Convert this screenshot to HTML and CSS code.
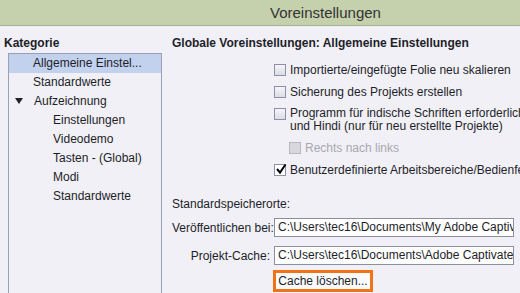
FILE: index.html
```html
<!DOCTYPE html>
<html lang="de">
<head>
    <meta charset="UTF-8">
    <title>Voreinstellungen</title>
    <link rel="stylesheet" href="styles.css">
</head>
<body>
    <div class="titlebar">Voreinstellungen</div>

    <div class="content">
        <div class="sidebar">
            <h3>Kategorie</h3>
            <div class="tree">
                <div class="item selected">Allgemeine Einstel...</div>
                <div class="item">Standardwerte</div>
                <div class="item"><span class="arrow"></span>Aufzeichnung</div>
                <div class="item sub">Einstellungen</div>
                <div class="item sub">Videodemo</div>
                <div class="item sub">Tasten - (Global)</div>
                <div class="item sub">Modi</div>
                <div class="item sub">Standardwerte</div>
            </div>
        </div>

        <div class="main">
            <h3>Globale Voreinstellungen: Allgemeine Einstellungen</h3>

            <div class="options">
                <label class="check"><span class="box"></span>Importierte/eingefügte Folie neu skalieren</label>
                <label class="check"><span class="box"></span>Sicherung des Projekts erstellen</label>
                <label class="check two-line"><span class="box"></span>Programm für indische Schriften erforderlich – Bengali, Gujarati<br>und Hindi (nur für neu erstellte Projekte)</label>
                <label class="check disabled"><span class="box"></span>Rechts nach links</label>
                <label class="check"><span class="box checked">
                    <svg width="12" height="12" viewBox="0 0 12 12"><path d="M2 6 L5 9.5 L10.5 1.5" fill="none" stroke="#000" stroke-width="2"/></svg>
                </span>Benutzerdefinierte Arbeitsbereiche/Bedienfelder</label>
            </div>

            <div class="section">Standardspeicherorte:</div>

            <div class="field">
                <span class="lbl">Veröffentlichen bei:</span>
                <div class="input">C:\Users\tec16\Documents\My Adobe Captivate Projects</div>
            </div>
            <div class="field">
                <span class="lbl right">Projekt-Cache:</span>
                <div class="input">C:\Users\tec16\Documents\Adobe Captivate Cached Projects</div>
            </div>
            <div class="field">
                <span class="lbl"></span>
                <div class="btn-wrap"><button class="btn">Cache löschen...</button></div>
            </div>
        </div>
    </div>
</body>
</html>
```

FILE: styles.css
```css
body {
    margin: 0;
    font-family: "Liberation Sans", Arial, sans-serif;
    font-size: 12px;
    color: #1e1e2a;
    background-color: #f0f0f6;
    overflow: hidden;
    height: 293px;
}

.titlebar {
    height: 25px;
    line-height: 25px;
    background-color: #c5d0ad;
    border-bottom: 1px solid #a4ad8d;
    color: #333;
    font-size: 15px;
    padding-left: 270px;
}

.content {
    display: flex;
    height: 267px;
    overflow: hidden;
}

h3 {
    margin: 0;
    font-size: 12px;
    font-weight: bold;
    height: 27px;
    line-height: 34px;
}

.sidebar {
    width: 162px;
    padding-left: 4px;
    flex-shrink: 0;
}

.tree {
    margin-left: 4px;
    width: 152px;
    height: 240px;
    border: 1px solid #9a9eb6;
    border-bottom: none;
}

.item {
    height: 19px;
    line-height: 19px;
    padding-left: 24px;
    white-space: nowrap;
}

.item.selected {
    background-color: #c1d1ee;
}

.item.sub {
    padding-left: 44px;
}

.arrow {
    display: inline-block;
    margin-left: -18px;
    margin-right: 11px;
    width: 0;
    height: 0;
    border-left: 4px solid transparent;
    border-right: 4px solid transparent;
    border-top: 6px solid #222;
    vertical-align: 1px;
}

.main {
    flex: 1;
    padding-left: 6px;
    min-width: 0;
    overflow: hidden;
}

.options {
    display: flex;
    flex-direction: column;
    padding-left: 102px;
    padding-top: 10px;
}

.check {
    display: flex;
    align-items: flex-start;
    white-space: nowrap;
    line-height: 14px;
    margin-bottom: 8px;
}

.check.two-line {
    line-height: 13px;
}

.box {
    width: 10px;
    height: 10px;
    border: 1px solid #8d90a8;
    background: linear-gradient(#f4f4f8, #dcdce6);
    margin-right: 4px;
    margin-top: 1px;
    flex-shrink: 0;
    position: relative;
}

.box.checked {
    background: #fff;
}

.box svg {
    position: absolute;
    left: 0;
    top: -2px;
}

.check.disabled {
    color: #a8a8b0;
    padding-left: 15px;
}

.check.disabled .box {
    border-color: #b8b8c0;
    background: #d8d8dc;
}

.section {
    margin-top: 12px;
    height: 21px;
}

.field {
    display: flex;
    align-items: center;
    margin-bottom: 9px;
}

.lbl {
    width: 102px;
    white-space: nowrap;
}

.lbl.right {
    text-align: right;
    padding-right: 4px;
    width: 98px;
}

.input {
    width: 235px;
    height: 17px;
    line-height: 17px;
    border: 1px solid #8b8e9e;
    background: #fff;
    padding-left: 3px;
    white-space: nowrap;
    overflow: hidden;
    flex-shrink: 0;
}

.btn-wrap {
    margin-top: -4px;
    margin-left: -1px;
    border: 3px solid #f07414;
}

.btn {
    display: block;
    font-family: inherit;
    font-size: 12px;
    color: #1e1e2a;
    background: #fbfbfd;
    border: none;
    width: 94px;
    height: 16px;
    padding: 0;
    line-height: 16px;
    text-align: center;
}
```
